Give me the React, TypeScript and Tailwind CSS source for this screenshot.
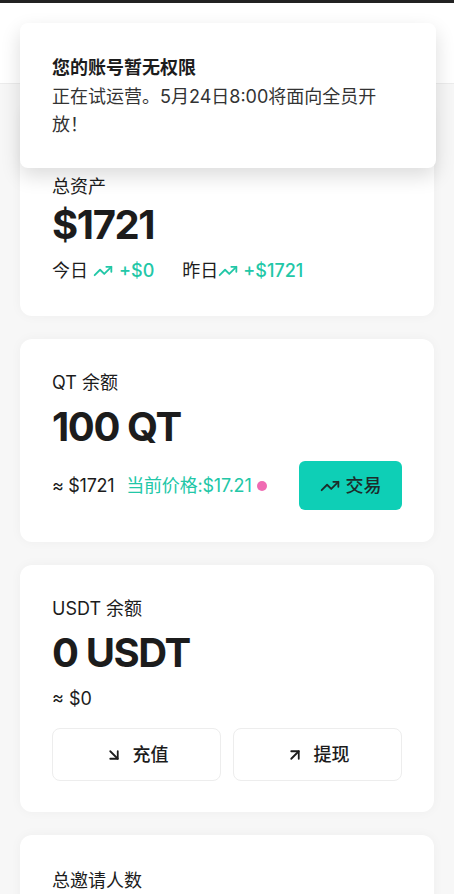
import React from "react";
import { TrendingUp, ArrowDownRight, ArrowUpRight } from "lucide-react";

const font = { fontFamily: 'Inter, "Noto Sans CJK SC", sans-serif' };

export default function App() {
  return (
    <div className="relative min-h-[894px] bg-[#f7f7f7] text-[#1c1c1c]" style={font}>
      <div className="h-[3px] bg-[#222]" />
      <div className="h-[81px] bg-white border-b border-[#ececec]" />

      <div className="flex flex-col gap-[23px] px-5 pt-[22px] pb-10">
        <div className="rounded-xl bg-white px-8 pt-[69px] pb-[33px] shadow-[0_0_12px_rgba(0,0,0,0.04)]">
          <div className="text-[18px] leading-6">总资产</div>
          <div className="mt-[2px] text-[40px] font-bold leading-[48px] tracking-[-1.4px]">$1721</div>
          <div className="mt-[10px] flex items-center text-[18px] leading-6">
            <span>今日</span>
            <TrendingUp className="ml-[5px] h-5 w-5 text-[#22c7a7]" strokeWidth={2.2} />
            <span className="ml-[6px] font-medium text-[#22c7a7]">+$0</span>
            <span className="ml-[28px]">昨日</span>
            <TrendingUp className="ml-0 h-5 w-5 text-[#22c7a7]" strokeWidth={2.2} />
            <span className="ml-[5px] font-medium text-[#22c7a7]">+$1721</span>
          </div>
        </div>

        <div className="rounded-xl bg-white px-8 pt-8 pb-8 shadow-[0_0_12px_rgba(0,0,0,0.04)]">
          <div className="text-[18px] leading-6">QT 余额</div>
          <div className="mt-2 text-[40px] font-bold leading-[48px] tracking-[-1.4px]">100 QT</div>
          <div className="mt-[10px] flex items-center">
            <span className="text-[18px] leading-6 tracking-[-0.3px]">≈ $1721</span>
            <span className="ml-3 text-[18px] leading-6 tracking-[-0.2px] text-[#22c7a7]">当前价格:$17.21</span>
            <span className="ml-[5px] h-[10px] w-[10px] rounded-full bg-[#f06bb3]" />
            <button className="ml-auto flex h-[49px] w-[103px] items-center justify-center gap-[6px] rounded-md bg-[#0ecfb6] text-[18px] font-medium text-[#1d2d2b]">
              <TrendingUp className="h-5 w-5" strokeWidth={2.2} />
              交易
            </button>
          </div>
        </div>

        <div className="rounded-xl bg-white px-8 pt-8 pb-[31px] shadow-[0_0_12px_rgba(0,0,0,0.04)]">
          <div className="text-[18px] leading-6">USDT 余额</div>
          <div className="mt-2 text-[40px] font-bold leading-[48px] tracking-[-1.4px]">0 USDT</div>
          <div className="mt-[10px] text-[18px] leading-6">≈ $0</div>
          <div className="mt-[17px] grid grid-cols-2 gap-3">
            <button className="flex h-[53px] items-center justify-center gap-[10px] rounded-lg border border-[#ededed] bg-white text-[18px] font-medium">
              <ArrowDownRight className="h-[18px] w-[18px]" strokeWidth={2.4} />
              充值
            </button>
            <button className="flex h-[53px] items-center justify-center gap-[10px] rounded-lg border border-[#ededed] bg-white text-[18px] font-medium">
              <ArrowUpRight className="h-[18px] w-[18px]" strokeWidth={2.4} />
              提现
            </button>
          </div>
        </div>

        <div className="rounded-xl bg-white px-8 pt-[34px] pb-8 shadow-[0_0_12px_rgba(0,0,0,0.04)]">
          <div className="text-[18px] leading-6">总邀请人数</div>
        </div>
      </div>

      <div className="absolute left-5 top-[23px] w-[416px] rounded-lg bg-white pl-8 pr-8 pt-[33px] pb-[29px] shadow-[0_8px_20px_rgba(0,0,0,0.14)]">
        <div className="text-[18px] font-bold leading-6">您的账号暂无权限</div>
        <div className="mt-[3px] text-[18px] leading-[28px] text-[#333]">
          正在试运营。5月24日8:00将面向全员开
          <br />
          放！
        </div>
      </div>
    </div>
  );
}
